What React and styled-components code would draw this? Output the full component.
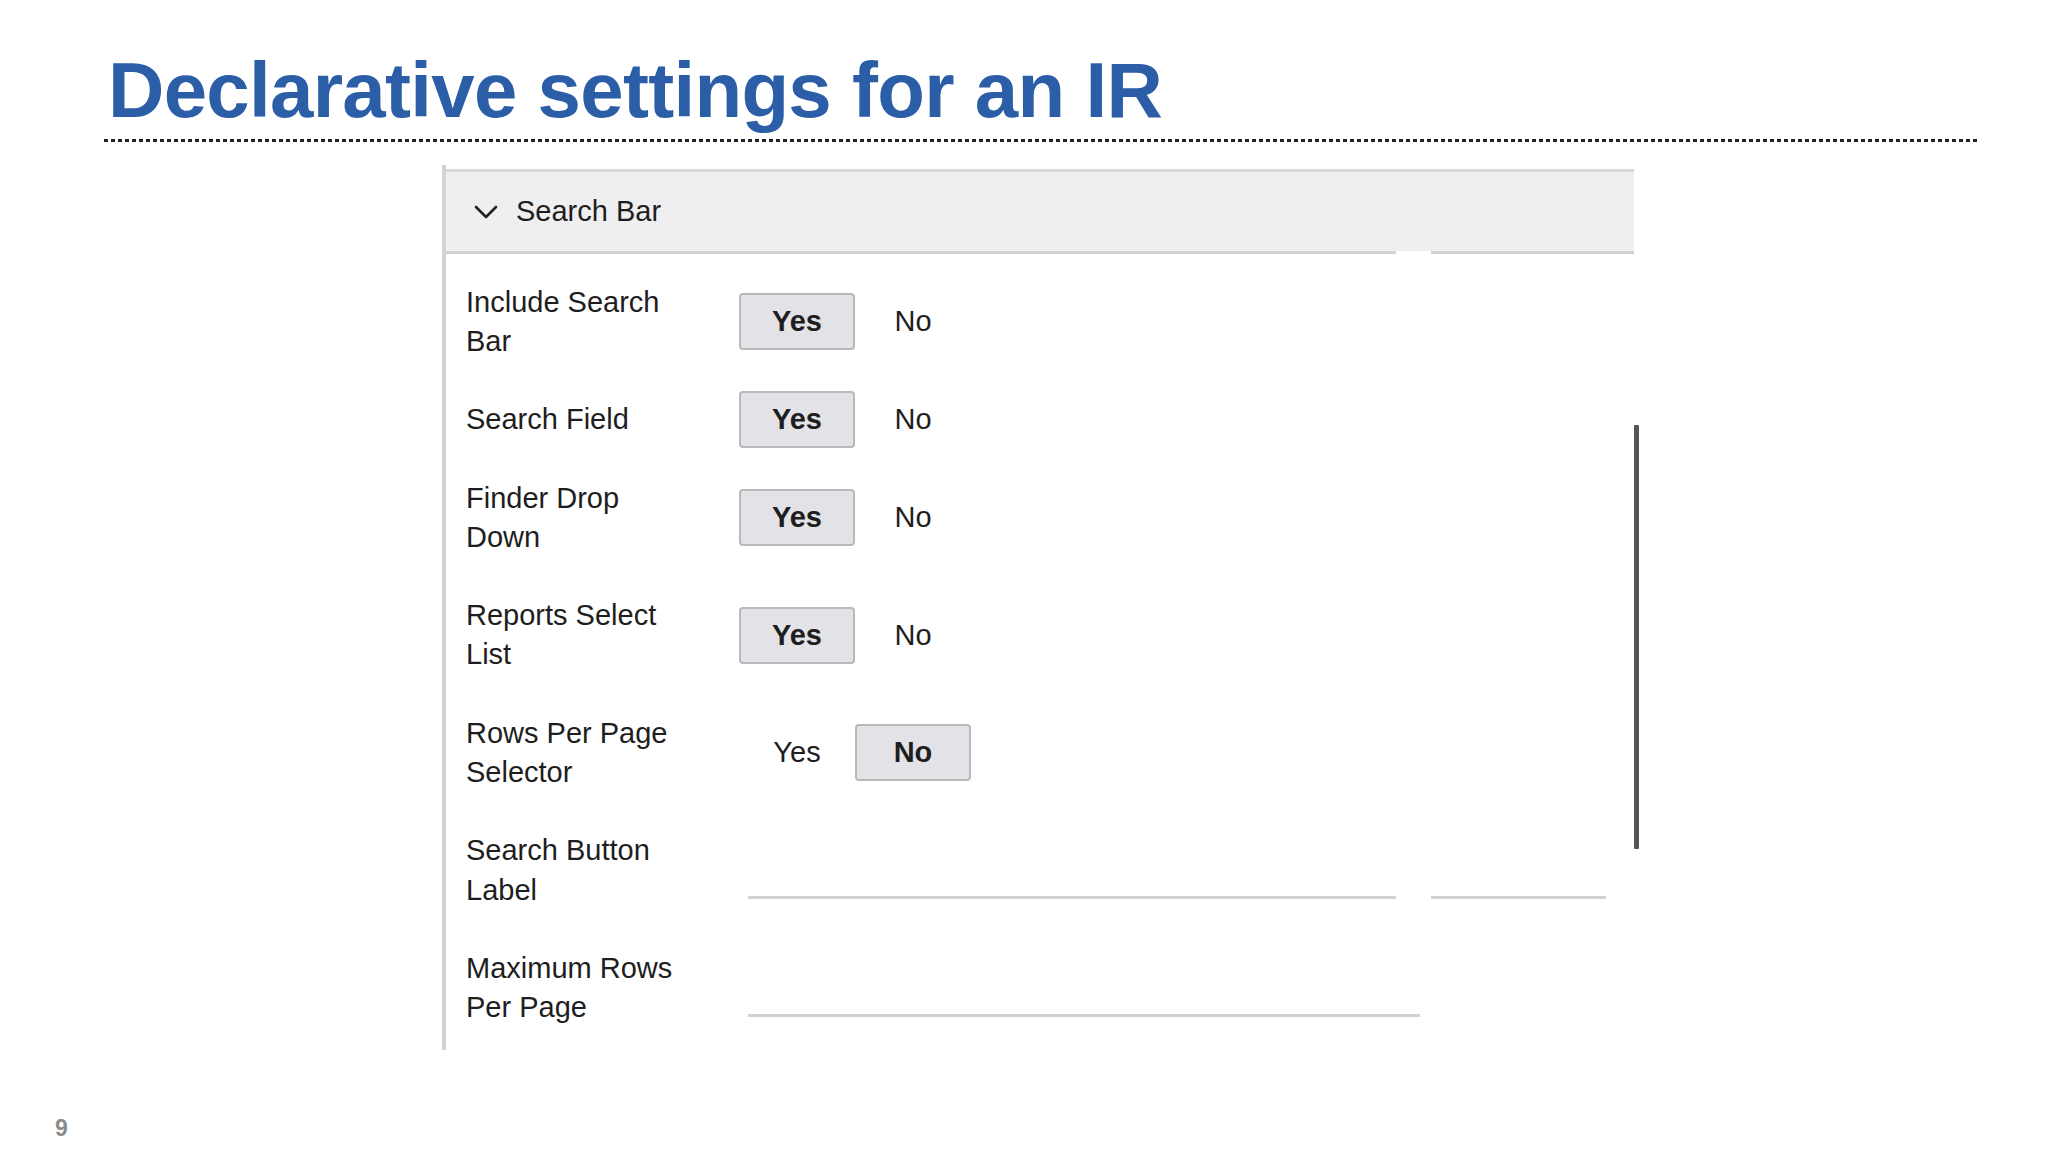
import React from 'react';
import styled, { createGlobalStyle } from 'styled-components';

const GlobalStyle = createGlobalStyle`
  html, body {
    margin: 0;
    padding: 0;
    background: #ffffff;
  }
  body {
    font-family: "Liberation Sans", Arial, Helvetica, sans-serif;
    color: #1e1e1e;
  }
`;

const rows = [
  { label: 'Include Search Bar', type: 'toggle', value: 'Yes' },
  { label: 'Search Field', type: 'toggle', value: 'Yes' },
  { label: 'Finder Drop Down', type: 'toggle', value: 'Yes' },
  { label: 'Reports Select List', type: 'toggle', value: 'Yes' },
  { label: 'Rows Per Page Selector', type: 'toggle', value: 'No' },
  { label: 'Search Button Label', type: 'fields', widths: [648, 175] },
  { label: 'Maximum Rows Per Page', type: 'fields', widths: [672] },
];

const Chevron = () => (
  <svg width="24" height="14" viewBox="0 0 24 14" fill="none">
    <path d="M2 2 L12 12 L22 2" stroke="#222" strokeWidth="2.6" strokeLinecap="round" strokeLinejoin="round" />
  </svg>
);

const App = () => {
  return (
    <>
      <GlobalStyle />
      <Slide>
        <Title>Declarative settings for an IR</Title>
        <Rule />
        <Panel>
          <Header>
            <Chevron />
            <HeaderText>Search Bar</HeaderText>
          </Header>
          <Body>
            {rows.map((row) => (
              <Row key={row.label}>
                <Label>{row.label}</Label>
                {row.type === 'toggle' ? (
                  <Segmented>
                    {['Yes', 'No'].map((opt) => (
                      <Segment key={opt} $active={opt === row.value}>
                        {opt}
                      </Segment>
                    ))}
                  </Segmented>
                ) : (
                  <Fields>
                    {row.widths.map((w, i) => (
                      <Field key={i} style={{ width: w }} />
                    ))}
                  </Fields>
                )}
              </Row>
            ))}
          </Body>
          <ScrollThumb />
        </Panel>
        <Footer>9</Footer>
      </Slide>
    </>
  );
};

export default App;

const Slide = styled.div`
  width: 2048px;
  height: 1152px;
  box-sizing: border-box;
  padding-top: 51px;
  display: flex;
  flex-direction: column;
  overflow: hidden;
`;

const Title = styled.h1`
  margin: 0 0 0 108px;
  font-family: "Liberation Sans", Arial, sans-serif;
  font-weight: 700;
  font-size: 78px;
  line-height: 78px;
  letter-spacing: -0.7px;
  color: #2b5ea7;
`;

const Rule = styled.div`
  margin: 10px 0 0 104px;
  width: 1875px;
  height: 3px;
  background: repeating-linear-gradient(90deg, #222 0 4px, transparent 4px 7px);
`;

const Panel = styled.div`
  position: relative;
  margin: 23px 0 0 442px;
  width: 1192px;
  box-sizing: border-box;
  border-left: 4px solid #d3d3d5;
  padding: 4px 0 3px;
`;

const Header = styled.div`
  position: relative;
  height: 85px;
  box-sizing: border-box;
  border-top: 3px solid #d8d8da;
  border-bottom: 3px solid #d3d3d6;
  background: #efeef1;
  display: flex;
  align-items: center;
  gap: 18px;
  padding-left: 28px;

  &::after {
    content: '';
    position: absolute;
    left: 950px;
    bottom: -3px;
    width: 35px;
    height: 3px;
    background: #ffffff;
  }
`;

const HeaderText = styled.span`
  font-size: 29px;
  color: #1e1e1e;
`;

const Body = styled.div`
  padding-top: 9px;
`;

const Row = styled.div`
  display: grid;
  grid-template-columns: 222px 1fr;
  column-gap: 51px;
  align-items: center;
  padding-left: 20px;
`;

const Label = styled.div`
  padding: 19.6px 0;
  font-size: 29px;
  line-height: 39.2px;
  color: #1e1e1e;
`;

const Segmented = styled.div`
  display: flex;
`;

const Segment = styled.div`
  width: 116px;
  height: 57px;
  box-sizing: border-box;
  display: flex;
  align-items: center;
  justify-content: center;
  font-size: 29px;
  color: #1e1e1e;
  border-radius: 4px;
  border: 2px solid ${(p) => (p.$active ? '#b9b9bc' : 'transparent')};
  background: ${(p) => (p.$active ? '#e3e2e6' : 'transparent')};
  font-weight: ${(p) => (p.$active ? 700 : 400)};
`;

const Fields = styled.div`
  display: flex;
  gap: 35px;
  margin-left: 9px;
`;

const Field = styled.div`
  height: 57px;
  box-sizing: border-box;
  border-bottom: 3px solid #d2d2d6;
`;

const ScrollThumb = styled.div`
  position: absolute;
  left: 1188px;
  top: 260px;
  width: 5px;
  height: 424px;
  background: #555558;
  border-radius: 1px;
`;

const Footer = styled.div`
  margin-top: auto;
  padding: 0 0 12px 55px;
  font-family: "Liberation Sans", Arial, sans-serif;
  font-weight: 700;
  font-size: 23px;
  line-height: 23px;
  color: #8b8b8b;
`;
